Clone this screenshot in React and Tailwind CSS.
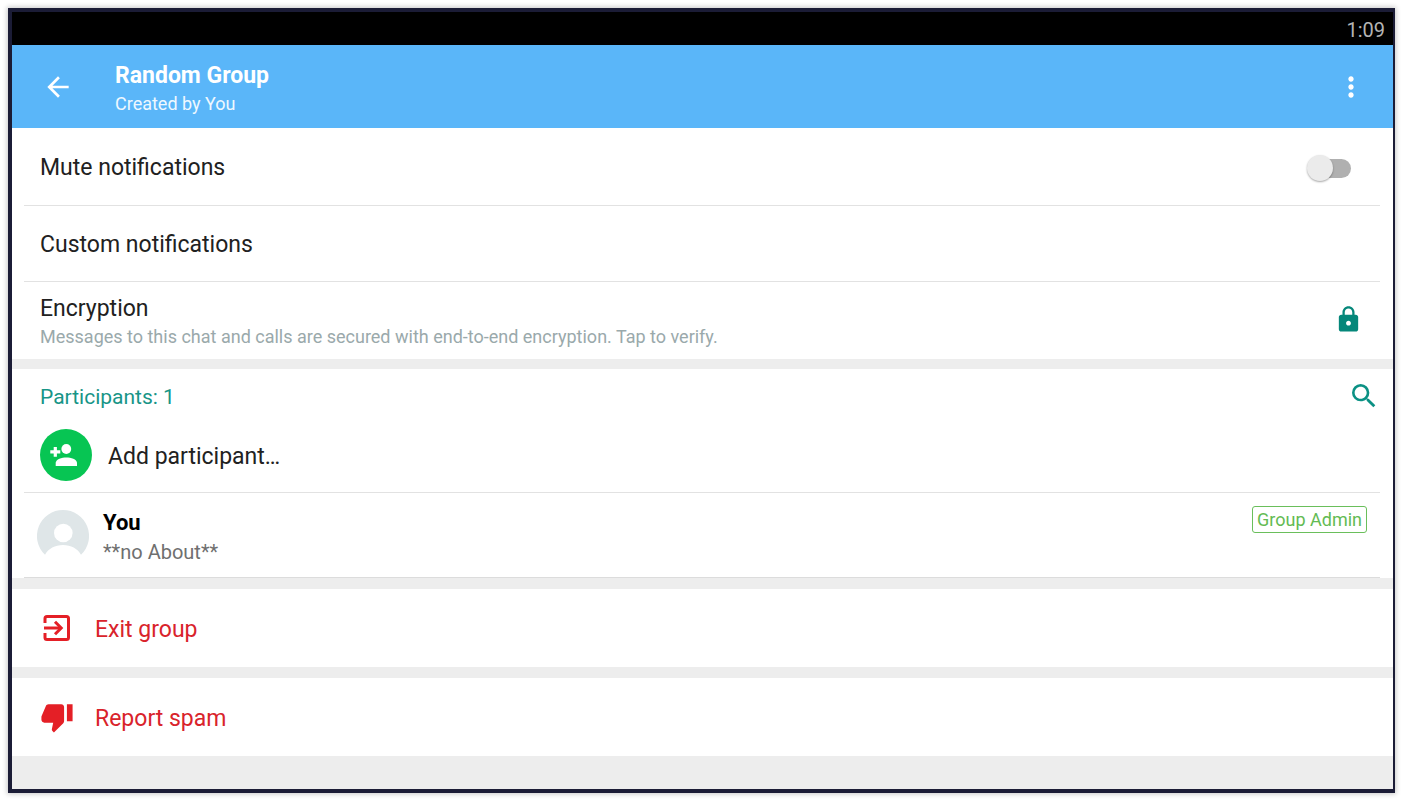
import {
  MdArrowBack,
  MdLock,
  MdMoreVert,
  MdSearch,
  MdThumbDown,
} from "react-icons/md";

function ExitIcon({ className }) {
  return (
    <svg
      viewBox="0 0 34 34"
      className={className}
      fill="none"
      stroke="currentColor"
      strokeWidth="3"
      aria-hidden="true"
    >
      <path d="M5 12V7.500a2 2 0 0 1 2-2h19.500a2 2 0 0 1 2 2v19a2 2 0 0 1-2 2H7a2 2 0 0 1-2-2V22" />
      <path d="M4 17h17" />
      <path d="M15 10.800 21.200 17 15 23.200" />
    </svg>
  );
}

function AddPersonBadge() {
  return (
    <svg viewBox="0 0 52 52" className="size-[52px] shrink-0" aria-hidden="true">
      <circle cx="26" cy="26" r="26" fill="#07c553" />
      <g fill="#fff">
        <path d="M13.700 18h3.200v3.300h3.400v3.200h-3.400v3.300h-3.200v-3.300h-3.400v-3.200h3.400z" />
        <circle cx="26.300" cy="20" r="4.900" />
        <path d="M15.700 37v-3.200c0-3.600 6.200-5.400 10.650-5.400S37 30.200 37 33.800V37z" />
      </g>
    </svg>
  );
}

function DefaultAvatar() {
  return (
    <svg viewBox="0 0 52 52" className="size-[52px] shrink-0" aria-hidden="true">
      <path
        fill="#dfe6e8"
        d="M26 0a26 26 0 0 1 18 44.800C40.500 38.500 34 35 26 35S11.500 38.500 8 44.800A26 26 0 0 1 26 0z"
      />
      <circle cx="26.300" cy="23" r="9.300" fill="#fff" />
    </svg>
  );
}

function DangerRow({ icon: Icon, label }) {
  return (
    <button
      type="button"
      className="flex h-[78px] w-full shrink-0 items-center gap-[21px] bg-white pl-7 text-left text-[23px] leading-7 text-[#d9232b]"
    >
      <Icon className="size-[34px] shrink-0 text-[#e41f26]" aria-hidden="true" />
      <span className="pt-1">{label}</span>
    </button>
  );
}

export default function App() {
  return (
    <div className="flex min-h-screen bg-white pt-2 pr-[7px] pb-[7px] pl-2 font-['Roboto',sans-serif]">
      <div className="flex min-w-0 flex-1 flex-col border-y-4 border-r-2 border-l-4 border-[#1b1c36] bg-[#ededed] text-[#212121] shadow-[0_0_5px_1px_rgba(0,0,0,0.22)]">
        <div className="flex h-[33px] shrink-0 items-center justify-end bg-black pt-[2px] pr-2 text-[20px] leading-6 text-[#b4b4b4]">
          <time>1:09</time>
        </div>

        <header className="flex h-[83px] shrink-0 items-center bg-[#5ab6f9] pr-[26px] pl-[30px] text-white">
          <button type="button" aria-label="Back" className="shrink-0">
            <MdArrowBack className="size-8" />
          </button>
          <div className="min-w-0 flex-1 pt-[6px] pl-[41px]">
            <h1 className="text-[23px] leading-7 font-bold">Random Group</h1>
            <p className="text-[18px] leading-7 text-[#eef8ff]">Created by You</p>
          </div>
          <button type="button" aria-label="More options" className="shrink-0">
            <MdMoreVert className="size-8" />
          </button>
        </header>

        <main className="flex flex-col">
          <section className="bg-white pr-[13px] pl-3">
            <label className="flex h-[78px] items-center justify-between border-b border-[#e2e2e2] pt-[3px] pr-[29px] pl-4 text-[23px] leading-7">
              Mute notifications
              <input
                type="checkbox"
                role="switch"
                className="relative h-[19px] w-10 appearance-none rounded-full bg-[#b0b0b0] before:absolute before:-top-1 before:-left-1 before:size-[26px] before:rounded-full before:bg-[#ebebeb] before:shadow-[0_1px_2px_rgba(0,0,0,0.35)] before:content-[''] checked:bg-[#80cbc4] checked:before:left-[18px] checked:before:bg-[#009688]"
              />
            </label>
            <button
              type="button"
              className="flex h-[76px] w-full items-center border-b border-[#e2e2e2] pt-[3px] pl-4 text-left text-[23px] leading-7"
            >
              Custom notifications
            </button>
            <button
              type="button"
              className="flex h-[77px] w-full items-center justify-between pr-[17px] pl-4 text-left"
            >
              <span className="pt-1">
                <span className="block text-[23px] leading-7">Encryption</span>
                <span className="block text-[18px] leading-7 text-[#9aa9ab]">
                  Messages to this chat and calls are secured with end-to-end
                  encryption. Tap to verify.
                </span>
              </span>
              <span className="pb-[2px]">
                <MdLock className="size-[29px] shrink-0 text-[#05877a]" aria-hidden="true" />
              </span>
            </button>
          </section>

          <section className="mt-[10px] bg-white pr-[13px] pl-3">
            <div className="flex h-14 items-center justify-between pl-4">
              <h2 className="text-[21px] leading-7 text-[#179587]">Participants: 1</h2>
              <button
                type="button"
                aria-label="Search participants"
                className="pb-[3px] text-[#0b9184]"
              >
                <MdSearch className="size-8" />
              </button>
            </div>
            <button
              type="button"
              className="flex h-[68px] w-full items-center gap-4 border-b border-[#e2e2e2] pb-2 pl-4 text-left text-[23px] leading-7"
            >
              <AddPersonBadge />
              <span className="pt-1">Add participant…</span>
            </button>
            <div className="flex h-[85px] items-start border-b border-[#dcdcdc] pr-[13px] pl-[13px]">
              <div className="pt-[17px]">
                <DefaultAvatar />
              </div>
              <div className="flex-1 pt-4 pl-[14px]">
                <h3 className="text-[22px] leading-7 font-bold text-black">You</h3>
                <p className="text-[20px] leading-[30px] text-[#6f6f6f]">**no About**</p>
              </div>
              <span className="mt-[13px] rounded-[3px] border border-[#6abf5b] px-1 pt-px text-[18px] leading-6 text-[#63bb53]">
                Group Admin
              </span>
            </div>
          </section>

          <section className="mt-[11px]">
            <DangerRow icon={ExitIcon} label="Exit group" />
          </section>
          <section className="mt-[11px]">
            <DangerRow icon={MdThumbDown} label="Report spam" />
          </section>
        </main>
      </div>
    </div>
  );
}
